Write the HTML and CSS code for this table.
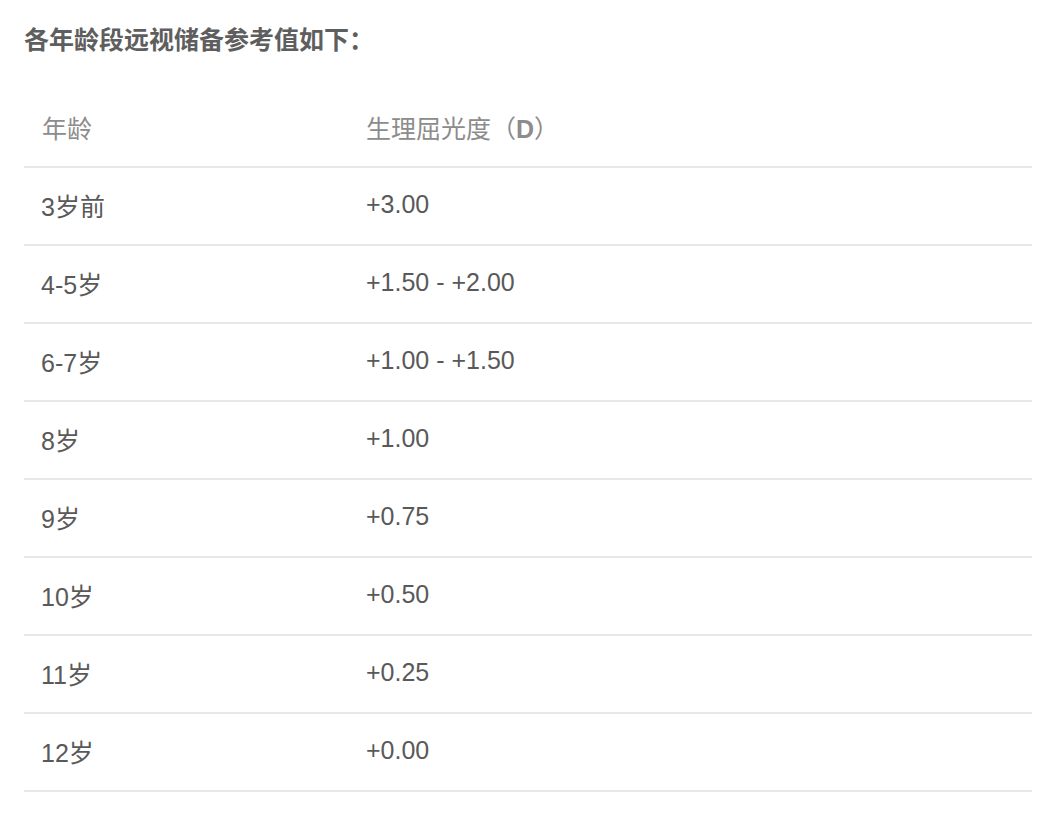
FILE: index.html
```html
<!DOCTYPE html>
<html lang="zh-CN">
<head>
<meta charset="utf-8">
<title>远视储备参考值</title>
<link rel="stylesheet" href="styles.css">
</head>
<body>
<div class="page">
  <h1 class="title">各年龄段远视储备参考值如下：</h1>
  <table class="ref-table">
    <thead>
      <tr><th class="col-age">年龄</th><th class="col-val">生理屈光度（<b>D</b>）</th></tr>
    </thead>
    <tbody>
      <tr><td class="col-age">3岁前</td><td class="col-val">+3.00</td></tr>
      <tr><td class="col-age">4-5岁</td><td class="col-val">+1.50 - +2.00</td></tr>
      <tr><td class="col-age">6-7岁</td><td class="col-val">+1.00 - +1.50</td></tr>
      <tr><td class="col-age">8岁</td><td class="col-val">+1.00</td></tr>
      <tr><td class="col-age">9岁</td><td class="col-val">+0.75</td></tr>
      <tr><td class="col-age">10岁</td><td class="col-val">+0.50</td></tr>
      <tr><td class="col-age">11岁</td><td class="col-val">+0.25</td></tr>
      <tr><td class="col-age">12岁</td><td class="col-val">+0.00</td></tr>
    </tbody>
  </table>
</div>
</body>
</html>
```
FILE: styles.css
```css
html, body {
  margin: 0;
  padding: 0;
  background: #ffffff;
}
.page {
  width: 1008px;
  padding: 0 0 0 24px;
  font-family: "Liberation Sans", "Noto Sans CJK SC", sans-serif;
}
.title {
  margin: 0;
  height: 90px;
  line-height: 80px;
  font-size: 25px;
  font-weight: 700;
  color: #5e5e5e;
  letter-spacing: 0;
}
.ref-table {
  width: 1008px;
  border-collapse: collapse;
  table-layout: fixed;
}
.ref-table th,
.ref-table td {
  height: 73px;
  padding: 0 0 3px 0;
  text-align: left;
  vertical-align: middle;
  font-size: 25px;
  border-bottom: 2px solid #e8e8e8;
}
.ref-table th {
  font-weight: 400;
  color: #8c8c8c;
}
.ref-table th b {
  font-weight: 700;
}
.ref-table td {
  color: #595959;
}
.col-age {
  width: 325px;
  padding-left: 17px !important;
}
.ref-table th.col-age {
  padding-left: 18px !important;
  width: 324px;
}
.col-val {
  padding-left: 0;
}
```
